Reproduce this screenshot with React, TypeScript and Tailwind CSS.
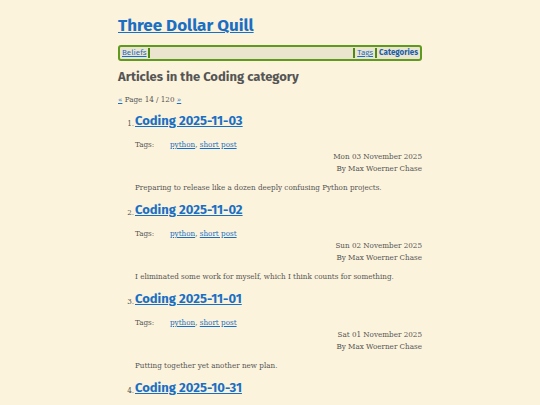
const heading = "font-['Fira_Sans','Open_Sans',sans-serif]";
const body = "font-['DejaVu_Serif_Condensed','DejaVu_Serif',serif]";

type Post = { n: number; title: string; date: string; blurb: string };

const posts: Post[] = [
  {
    n: 1,
    title: "Coding 2025-11-03",
    date: "Mon 03 November 2025",
    blurb: "Preparing to release like a dozen deeply confusing Python projects.",
  },
  {
    n: 2,
    title: "Coding 2025-11-02",
    date: "Sun 02 November 2025",
    blurb:
      "I eliminated some work for myself, which I think counts for something.",
  },
  {
    n: 3,
    title: "Coding 2025-11-01",
    date: "Sat 01 November 2025",
    blurb: "Putting together yet another new plan.",
  },
  { n: 4, title: "Coding 2025-10-31", date: "Fri 31 October 2025", blurb: "" },
];

const link = "text-[#1a6fc4] underline";

const Article = ({ post }: { post: Post }) => (
  <li className="flex">
    <span className={`${body} w-[17px] shrink-0 text-right pr-[1px] text-[8px] leading-[12px] pt-[6px] text-[#555]`}>
      {post.n}.
    </span>
    <div className="flex-1">
      <a
        href="#"
        className={`${heading} ${link} font-bold text-[13px] leading-[18px] block`}
      >
        {post.title}
      </a>
      <div className={`${body} text-[8px] text-[#555] mt-[9px]`}>
        <div className="flex leading-[12px]">
          <span className="w-[35px]">Tags:</span>
          <span>
            <a href="#" className={link}>
              python
            </a>
            ,{" "}
            <a href="#" className={link}>
              short post
            </a>
          </span>
        </div>
        <div className="text-right leading-[12px]">{post.date}</div>
        <div className="text-right leading-[12px]">By Max Woerner Chase</div>
        <p className="mt-[7px] leading-[12px]">{post.blurb}</p>
      </div>
    </div>
  </li>
);

export default function App() {
  return (
    <div className="min-h-[405px] bg-[#fcf3dc] text-[#555]">
      <div className="w-[304px] mx-auto pt-[14px]">
        <h1 className={`${heading} text-[17px] leading-[24px] font-bold`}>
          <a href="#" className={link}>
            Three Dollar Quill
          </a>
        </h1>
        <nav
          className={`${heading} mt-[7px] flex items-center h-[16px] border-2 border-[#5f9a1e] rounded-[3px] bg-[#ebe4cf] text-[8px] px-[2px]`}
        >
          <a href="#" className={link}>
            Beliefs
          </a>
          <span className="w-[2px] h-[10px] bg-[#4f8a14] ml-[1px]" />
          <span className="flex-1" />
          <span className="w-[2px] h-[10px] bg-[#4f8a14] mr-[2px]" />
          <a href="#" className={link}>
            Tags
          </a>
          <span className="w-[2px] h-[10px] bg-[#4f8a14] mx-[2px]" />
          <a href="#" className="text-[#1a5fa8] font-bold">
            Categories
          </a>
        </nav>
        <h2 className={`${heading} text-[13px] leading-[18px] font-bold mt-[7px] text-[#555]`}>
          Articles in the Coding category
        </h2>
        <div className={`${body} text-[8px] mt-[8px] leading-[12px]`}>
          <a href="#" className={link}>
            «
          </a>{" "}
          Page 14 / 120{" "}
          <a href="#" className={link}>
            »
          </a>
        </div>
        <ol className="mt-[6px] flex flex-col gap-[7px]">
          {posts.map((p) => (
            <Article key={p.n} post={p} />
          ))}
        </ol>
      </div>
    </div>
  );
}
